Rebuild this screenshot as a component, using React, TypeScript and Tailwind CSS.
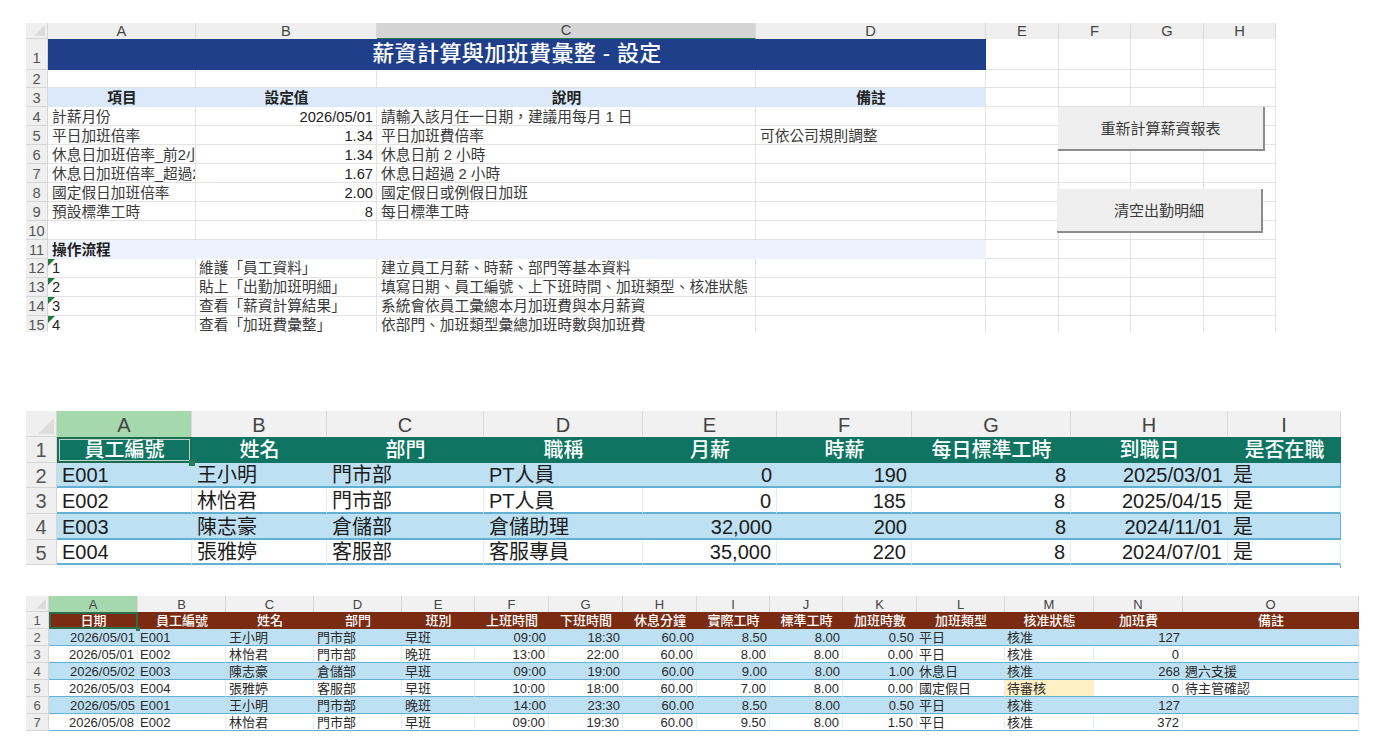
import type { ReactNode } from "react";

const FONT = "font-['Liberation_Sans','Noto_Sans_CJK_TC',sans-serif] [text-spacing-trim:space-all]";

function Corner({ size }: { size: string }) {
  return (
    <div className="relative border-r border-b border-[#d4d4d4] bg-[#efefef]">
      <div className={`absolute right-[2px] bottom-[2px] bg-[#dcdcdc] [clip-path:polygon(100%_0,100%_100%,0_100%)] ${size}`} />
    </div>
  );
}

function ColHead({ label, cls = "" }: { label: string; cls?: string }) {
  return (
    <div className={`flex items-center justify-center border-r border-[#d9d9d9] leading-none text-[#444] ${cls}`}>{label}</div>
  );
}

function RowNum({ n, cls = "" }: { n: number; cls?: string }) {
  return (
    <div className={`flex justify-center border-b border-r border-[#d6d6d6] bg-[#efefef] leading-none text-[#555] ${cls}`}>{n}</div>
  );
}

// green mark excel puts on numbers stored as text
function Cell({ children, cls = "", flag = false }: { children?: ReactNode; cls?: string; flag?: boolean }) {
  return (
    <div className={`relative flex min-w-0 items-center overflow-hidden whitespace-nowrap ${cls}`}>
      {flag && <span className="absolute left-0 top-0 h-[7px] w-[7px] bg-[#1f7a3d] [clip-path:polygon(0_0,100%_0,0_100%)]" />}
      {children}
    </div>
  );
}

const settingRows = [
  { n: 4, a: "計薪月份", b: "2026/05/01", c: "請輸入該月任一日期，建議用每月 1 日", d: "" },
  { n: 5, a: "平日加班倍率", b: "1.34", c: "平日加班費倍率", d: "可依公司規則調整" },
  { n: 6, a: "休息日加班倍率_前2小時", b: "1.34", c: "休息日前 2 小時", d: "" },
  { n: 7, a: "休息日加班倍率_超過2小時", b: "1.67", c: "休息日超過 2 小時", d: "" },
  { n: 8, a: "國定假日加班倍率", b: "2.00", c: "國定假日或例假日加班", d: "" },
  { n: 9, a: "預設標準工時", b: "8", c: "每日標準工時", d: "" },
  { n: 10, a: "", b: "", c: "", d: "" },
];

const flowRows = [
  { n: 12, a: "1", b: "維護「員工資料」", c: "建立員工月薪、時薪、部門等基本資料" },
  { n: 13, a: "2", b: "貼上「出勤加班明細」", c: "填寫日期、員工編號、上下班時間、加班類型、核准狀態" },
  { n: 14, a: "3", b: "查看「薪資計算結果」", c: "系統會依員工彙總本月加班費與本月薪資" },
  { n: 15, a: "4", b: "查看「加班費彙整」", c: "依部門、加班類型彙總加班時數與加班費" },
];

const grid1 = "border-r border-b border-[#e3e3e3] pt-[2px]";
const gridFlow = "border-r border-b border-[#e3e3e3]";

function ExtraCells() {
  return (
    <>
      <Cell cls={grid1} />
      <Cell cls={grid1} />
      <Cell cls={grid1} />
      <Cell cls={grid1} />
    </>
  );
}

function SettingsSheet() {
  return (
    <div className="relative w-[1250px] overflow-hidden text-[14.7px] text-[#3a3a3a]">
      <div className="grid h-[309px] grid-cols-[22px_148px_181px_379px_230px_73px_72px_73px_72px] grid-rows-[16px_31px_18px_19px_19px_19px_19px_19px_19px_19px_19px_19px_19px_19px_19px_19px]">
        <Corner size="h-[11px] w-[11px]" />
        <ColHead label="A" cls="bg-[#efefef]" />
        <ColHead label="B" cls="bg-[#efefef]" />
        <ColHead label="C" cls="border-b border-b-[#1f7a4d] bg-[#d4d4d4]" />
        {["D", "E", "F", "G", "H"].map((c) => (
          <ColHead key={c} label={c} cls="bg-[#efefef]" />
        ))}

        <RowNum n={1} cls="items-end pb-[3px]" />
        <div className="col-span-4 flex items-center justify-center bg-[#1f3f8a] pb-[2px] text-[22px] font-medium tracking-[0.4px] text-white">
          薪資計算與加班費彙整 - 設定
        </div>
        <ExtraCells />

        <RowNum n={2} cls="items-center pt-[2px]" />
        <Cell cls={grid1} />
        <Cell cls={grid1} />
        <Cell cls={grid1} />
        <Cell cls={grid1} />
        <ExtraCells />

        <RowNum n={3} cls="items-center pt-[2px]" />
        {["項目", "設定值", "說明", "備註"].map((h) => (
          <Cell key={h} cls="justify-center bg-[#dbe9fa] pt-[2px] font-bold text-[#222]">
            {h}
          </Cell>
        ))}
        <ExtraCells />

        {settingRows.map((r) => (
          <div key={r.n} className="contents">
            <RowNum n={r.n} cls="items-center pt-[2px]" />
            <Cell cls={`${grid1} pl-[4px]`}>{r.a}</Cell>
            <Cell cls={`${grid1} justify-end pr-[3px] text-[#222]`}>{r.b}</Cell>
            <Cell cls={`${grid1} pl-[4px]`}>{r.c}</Cell>
            <Cell cls={`${grid1} pl-[4px]`}>{r.d}</Cell>
            <ExtraCells />
          </div>
        ))}

        <RowNum n={11} cls="items-center pt-[2px]" />
        <div className="col-span-4 flex items-center bg-[#edf2fc] pl-[4px] pt-[1px] font-bold text-[#222]">操作流程</div>
        <ExtraCells />

        {flowRows.map((r) => (
          <div key={r.n} className="contents">
            <RowNum n={r.n} cls="items-center" />
            <Cell flag cls={`${gridFlow} pl-[4px] text-[#222]`}>{r.a}</Cell>
            <Cell cls={`${gridFlow} pl-[3px]`}>{r.b}</Cell>
            <Cell cls={`${gridFlow} pl-[4px]`}>{r.c}</Cell>
            <Cell cls={gridFlow} />
            <ExtraCells />
          </div>
        ))}
      </div>

      {/* macro buttons float over the grid */}
      <button className="absolute left-[1032px] top-[84px] flex h-[44px] w-[207px] items-center justify-center border-r-2 border-b-2 border-[#8c8c8c] bg-[#efefef] pt-[3px] text-[15px] text-[#3a3a3a]">
        重新計算薪資報表
      </button>
      <button className="absolute left-[1031px] top-[166px] flex h-[44px] w-[206px] items-center justify-center border-r-2 border-b-2 border-[#8c8c8c] bg-[#efefef] pt-[3px] text-[15px] text-[#3a3a3a]">
        清空出勤明細
      </button>
    </div>
  );
}

const employeeHead = ["員工編號", "姓名", "部門", "職稱", "月薪", "時薪", "每日標準工時", "到職日", "是否在職"];

const employees = [
  ["E001", "王小明", "門市部", "PT人員", "0", "190", "8", "2025/03/01", "是"],
  ["E002", "林怡君", "門市部", "PT人員", "0", "185", "8", "2025/04/15", "是"],
  ["E003", "陳志豪", "倉儲部", "倉儲助理", "32,000", "200", "8", "2024/11/01", "是"],
  ["E004", "張雅婷", "客服部", "客服專員", "35,000", "220", "8", "2024/07/01", "是"],
];

function EmployeeSheet() {
  const letters = ["A", "B", "C", "D", "E", "F", "G", "H", "I"];
  return (
    <div className="mt-[79px] grid h-[157px] w-[1315px] grid-cols-[31px_135px_135px_157px_159px_134px_135px_159px_157px_113px] grid-rows-[26px_26px_25px_26px_26px_25px_3px] overflow-hidden text-[20px]">
      <Corner size="h-[16px] w-[16px]" />
      {letters.map((c, i) => (
        <ColHead key={c} label={c} cls={`pt-[2px] ${i === 0 ? "bg-[#a6d8ae] text-[#1f5c3a]" : "bg-[#f1f1f1]"}`} />
      ))}

      <RowNum n={1} cls="items-center pt-[1px]" />
      {employeeHead.map((h, i) => (
        <div key={h} className="relative flex items-center justify-center bg-[#0f7562] font-medium text-white">
          {h}
          {i === 0 && (
            <>
              <span className="absolute inset-0 border-2 border-[#1d6b4c] outline outline-1 -outline-offset-3 outline-white/70" />
              <span className="absolute -bottom-[3px] -right-[3px] z-10 h-[6px] w-[6px] bg-[#2b7a5c]" />
            </>
          )}
        </div>
      ))}

      {employees.map((row, i) => (
        <div key={row[0]} className="contents">
          <RowNum n={i + 2} cls="items-center pt-[1px]" />
          {row.map((v, j) => (
            <Cell
              key={j}
              cls={`border-b-2 border-[#62b0d2] pt-[1px] text-[#1c1c1c] ${j >= 4 && j <= 7 ? "justify-end pr-[5px]" : "pl-[5px]"} ${i % 2 === 0 ? "bg-[#bde0f2]" : "border-r border-r-[#e2eef6] bg-white"} ${j === 8 ? "border-r border-r-[#62b0d2]" : ""}`}
            >
              {v}
            </Cell>
          ))}
        </div>
      ))}
      <div className="col-span-10 ml-[31px] border-r border-[#62b0d2] bg-[#f3f9fc]" />
    </div>
  );
}

const attendanceHead = ["日期", "員工編號", "姓名", "部門", "班別", "上班時間", "下班時間", "休息分鐘", "實際工時", "標準工時", "加班時數", "加班類型", "核准狀態", "加班費", "備註"];

const attendance = [
  ["2026/05/01", "E001", "王小明", "門市部", "早班", "09:00", "18:30", "60.00", "8.50", "8.00", "0.50", "平日", "核准", "127", ""],
  ["2026/05/01", "E002", "林怡君", "門市部", "晚班", "13:00", "22:00", "60.00", "8.00", "8.00", "0.00", "平日", "核准", "0", ""],
  ["2026/05/02", "E003", "陳志豪", "倉儲部", "早班", "09:00", "19:00", "60.00", "9.00", "8.00", "1.00", "休息日", "核准", "268", "週六支援"],
  ["2026/05/03", "E004", "張雅婷", "客服部", "早班", "10:00", "18:00", "60.00", "7.00", "8.00", "0.00", "國定假日", "待審核", "0", "待主管確認"],
  ["2026/05/05", "E001", "王小明", "門市部", "晚班", "14:00", "23:30", "60.00", "8.50", "8.00", "0.50", "平日", "核准", "127", ""],
  ["2026/05/08", "E002", "林怡君", "門市部", "早班", "09:00", "19:30", "60.00", "9.50", "8.00", "1.50", "平日", "核准", "372", ""],
];

const rightAligned = [0, 5, 6, 7, 8, 9, 10, 13];

function AttendanceSheet() {
  const letters = "ABCDEFGHIJKLMNO".split("");
  return (
    <div className="mt-[28px] grid h-[135px] w-[1333px] grid-cols-[23px_89px_88px_88px_88px_73px_74px_74px_74px_73px_73px_74px_88px_89px_89px_176px] grid-rows-[16px_17px_17px_17px_17px_17px_17px_17px] overflow-hidden text-[13px]">
      <Corner size="h-[10px] w-[10px]" />
      {letters.map((c, i) => (
        <ColHead key={c} label={c} cls={i === 0 ? "bg-[#a6d8ae] text-[#1f5c3a]" : "bg-[#f1f1f1]"} />
      ))}

      <RowNum n={1} cls="items-center pt-[1px]" />
      {attendanceHead.map((h, i) => (
        <div key={h} className="relative flex items-center justify-center bg-[#7a2b12] font-medium text-white">
          {h}
          {i === 0 && (
            <>
              <span className="absolute inset-0 border-2 border-[#2c6e49]" />
              <span className="absolute -bottom-[2px] -right-[2px] z-10 h-[4px] w-[4px] bg-[#2b7a5c]" />
            </>
          )}
        </div>
      ))}

      {attendance.map((row, i) => (
        <div key={i} className="contents">
          <RowNum n={i + 2} cls="items-center pt-[1px]" />
          {row.map((v, j) => (
            <Cell
              key={j}
              cls={`border-b border-[#62b0d2] pt-[1px] text-[#2a2a2a] ${rightAligned.includes(j) ? "justify-end pr-[3px]" : "pl-[2px]"} ${j >= 2 && j <= 4 ? "pl-[3px]" : ""} ${v === "待審核" ? "bg-[#fff1c4]" : i % 2 === 0 ? "bg-[#bde0f2]" : "border-r border-r-[#e2eef6] bg-white"}`}
            >
              {v}
            </Cell>
          ))}
        </div>
      ))}
    </div>
  );
}

export default function App() {
  return (
    <div className={`flex min-h-[747px] flex-col overflow-hidden bg-white pl-[26px] pt-[23px] ${FONT}`}>
      <SettingsSheet />
      <EmployeeSheet />
      <AttendanceSheet />
    </div>
  );
}
